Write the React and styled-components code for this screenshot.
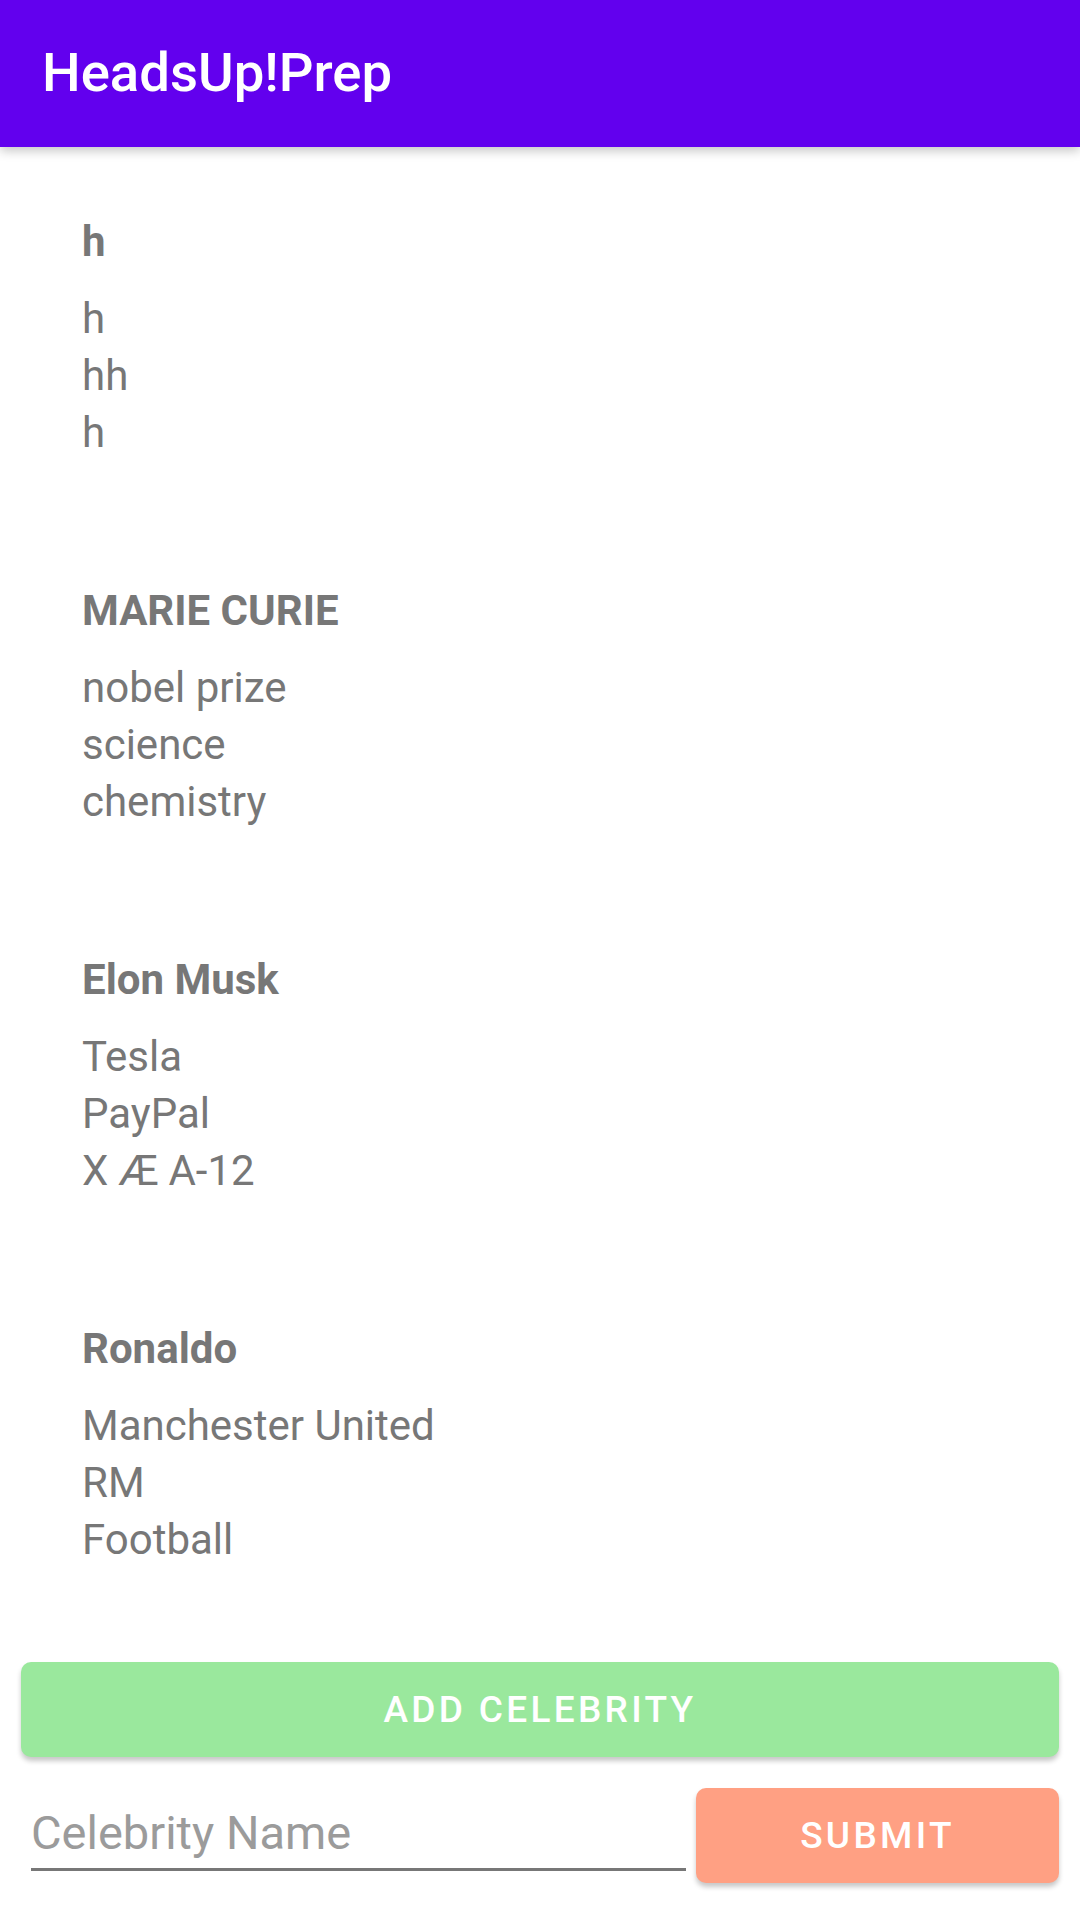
import React from 'react';
import styled, { createGlobalStyle } from 'styled-components';

const celebrities = [
  { name: 'h', hints: ['h', 'hh', 'h'] },
  { name: 'MARIE CURIE', hints: ['nobel prize', 'science', 'chemistry'] },
  { name: 'Elon Musk', hints: ['Tesla', 'PayPal', 'X Æ A-12'] },
  { name: 'Ronaldo', hints: ['Manchester United', 'RM', 'Football'] },
];

const App = () => {
  return (
    <Screen>
      <GlobalStyle />
      <AppBar>
        <AppTitle>HeadsUp!Prep</AppTitle>
      </AppBar>
      <CelebrityList>
        {celebrities.map((celeb) => (
          <CelebrityCard key={celeb.name}>
            <CelebrityName>{celeb.name}</CelebrityName>
            <Hints>
              {celeb.hints.map((hint, i) => (
                <Hint key={i}>{hint}</Hint>
              ))}
            </Hints>
          </CelebrityCard>
        ))}
      </CelebrityList>
      <Footer>
        <ActionButton $color="#9ae89d">Add Celebrity</ActionButton>
        <SubmitRow>
          <NameInput placeholder="Celebrity Name" />
          <SubmitButton $color="#ffa083">Submit</SubmitButton>
        </SubmitRow>
      </Footer>
    </Screen>
  );
};

const GlobalStyle = createGlobalStyle`
  body {
    margin: 0;
    font-family: Roboto, "Noto Sans", sans-serif;
    background: #fff;
  }
`;

const Screen = styled.div`
  width: 1080px;
  height: 1920px;
  display: flex;
  flex-direction: column;
  overflow: hidden;
  background: #fff;
`;

const AppBar = styled.header`
  height: 147px;
  flex-shrink: 0;
  background: #6200ee;
  display: flex;
  align-items: center;
  padding: 0 0 0 42px;
  box-shadow: 0 4px 10px rgba(0, 0, 0, 0.22);
  position: relative;
  z-index: 1;
`;

const AppTitle = styled.h1`
  margin: 0;
  color: #fff;
  font-size: 54.5px;
  font-weight: 500;
  line-height: 1;
  padding-bottom: 2px;
`;

const CelebrityList = styled.ul`
  list-style: none;
  margin: 0;
  padding: 5px 0 0;
  flex: 1;
  overflow: hidden;
`;

const CelebrityCard = styled.li`
  padding: 61px 0 60px 82px;
  color: #777;
`;

const CelebrityName = styled.h3`
  margin: 0 0 20px;
  font-size: 42px;
  line-height: 57px;
  font-weight: 700;
`;

const Hints = styled.div`
  display: flex;
  flex-direction: column;
`;

const Hint = styled.span`
  font-size: 42px;
  line-height: 57px;
`;

const Footer = styled.div`
  padding: 0 21px 37px;
  display: flex;
  flex-direction: column;
  gap: 31px;
`;

const ActionButton = styled.button`
  height: 95px;
  border: none;
  border-radius: 10px;
  background: ${(p) => p.$color};
  color: #fff;
  font-family: Roboto, sans-serif;
  font-size: 37px;
  font-weight: 500;
  letter-spacing: 3.3px;
  text-transform: uppercase;
  box-shadow: 0 4px 5px rgba(0, 0, 0, 0.22);
  padding: 0;
`;

const SubmitRow = styled.div`
  display: flex;
  align-items: flex-end;
  gap: 10px;
`;

const NameInput = styled.input`
  flex: 1;
  box-sizing: border-box;
  height: 64px;
  margin: 0 0 12px 10px;
  padding: 0 0 10px 0;
  border: none;
  border-bottom: 3px solid #777;
  background: transparent;
  font-family: Roboto, sans-serif;
  font-size: 47px;
  color: #333;
  outline: none;
  &::placeholder {
    color: #9b9b9b;
  }
`;

const SubmitButton = styled(ActionButton)`
  width: 363px;
  flex-shrink: 0;
`;

export default App;
